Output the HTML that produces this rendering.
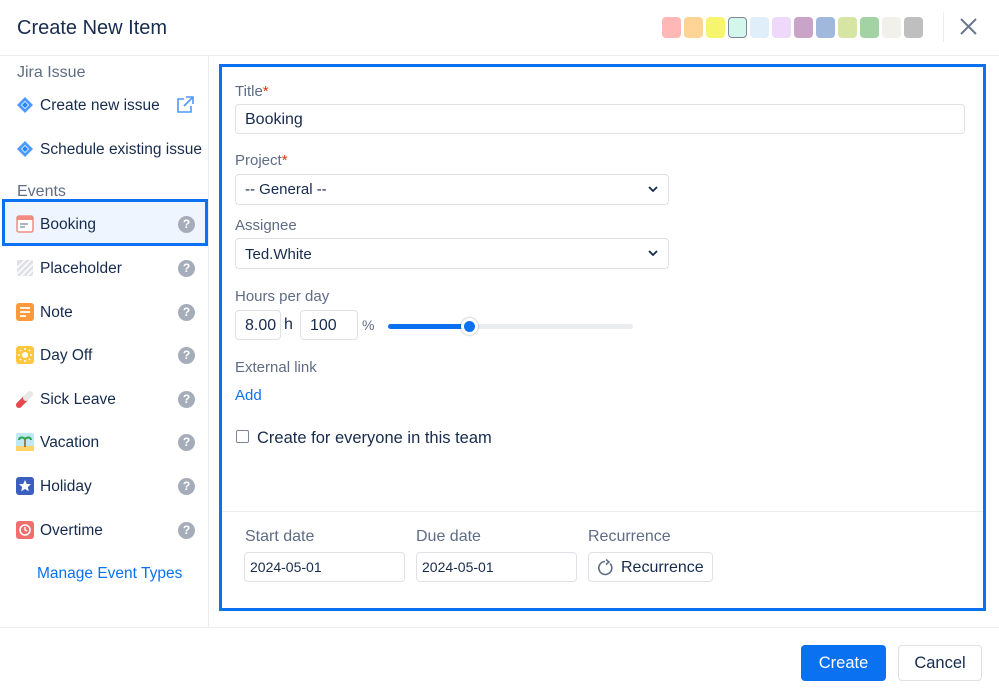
<!DOCTYPE html>
<html><head><meta charset="utf-8">
<style>
*{box-sizing:border-box;margin:0;padding:0}
body{width:999px;height:698px;background:#fff;font-family:"Liberation Sans",sans-serif;color:#172b4d;position:relative;overflow:hidden}
.a{position:absolute}
.lbl{color:#5e6c84;font-size:15px}
.inp{position:absolute;border:1px solid #dfe1e6;border-radius:4px;background:#fff;font-size:16px;padding-left:9px;display:flex;align-items:center;color:#172b4d}
.side{font-size:15.5px;color:#172b4d}
.q{position:absolute;left:178px;width:17px;height:17px;border-radius:50%;background:#a5adba;color:#fff;font-size:12px;font-weight:bold;text-align:center;line-height:17px}
.sw{position:absolute;top:17px;width:19px;height:21px;border-radius:4px}
.chev{position:absolute;right:10px;top:50%;margin-top:-4px}
</style></head><body>
<div class="a" style="left:17px;top:17px;font-size:20px;color:#172b4d">Create New Item</div>
<div class="sw" style="left:662px;background:#ffb8b5"></div>
<div class="sw" style="left:684px;background:#ffd494"></div>
<div class="sw" style="left:706px;background:#f7f56e"></div>
<div class="sw" style="left:728px;background:#d3f7ea;border:1px solid #7a869a"></div>
<div class="sw" style="left:750px;background:#e0eefa"></div>
<div class="sw" style="left:772px;background:#efd9fb"></div>
<div class="sw" style="left:794px;background:#c9a3c8"></div>
<div class="sw" style="left:816px;background:#a1b8dd"></div>
<div class="sw" style="left:838px;background:#d6e4a4"></div>
<div class="sw" style="left:860px;background:#a3d3a4"></div>
<div class="sw" style="left:882px;background:#f1f0ea"></div>
<div class="sw" style="left:904px;background:#bfbfbf"></div>
<div class="a" style="left:943px;top:12px;width:1px;height:30px;background:#ebecf0"></div>
<svg class="a" style="left:959px;top:17px" width="19" height="19" viewBox="0 0 19 19"><path d="M2 2L17 17M17 2L2 17" stroke="#6b778c" stroke-width="2"/></svg>
<div class="a" style="left:0;top:55px;width:999px;height:1px;background:#ebecf0"></div>
<div class="a" style="left:208px;top:56px;width:1px;height:571px;background:#ebecf0"></div>

<div class="a lbl" style="left:17px;top:64px;font-size:16px">Jira Issue</div>
<svg class="a" style="left:17px;top:97px" width="16" height="16" viewBox="0 0 16 16"><path d="M8 0L16 8L8 16L0 8Z" fill="#4c9aff"/><path d="M8 4L12 8L8 12L4 8Z" fill="#fff"/><path d="M8 5L11 8L8 11L5 8Z" fill="#2684ff"/></svg>
<div class="a side" style="left:40px;top:97px">Create new issue</div>
<svg class="a" style="left:176px;top:96px" width="18" height="18" viewBox="0 0 18 18" fill="none" stroke="#4c9aff" stroke-width="1.6"><path d="M8 3H2V16H15V10"/><path d="M10 1H17V8M17 1L8 10"/></svg>
<svg class="a" style="left:17px;top:141px" width="16" height="16" viewBox="0 0 16 16"><path d="M8 0L16 8L8 16L0 8Z" fill="#4c9aff"/><path d="M8 4L12 8L8 12L4 8Z" fill="#fff"/><path d="M8 5L11 8L8 11L5 8Z" fill="#2684ff"/></svg>
<div class="a side" style="left:40px;top:141px">Schedule existing issue</div>
<div class="a lbl" style="left:17px;top:183px;font-size:16px">Events</div>

<div class="a" style="left:2px;top:199px;width:206px;height:47px;border:3px solid #0a72f0;background:#eef5fe"></div>
<svg class="a" style="left:16px;top:215px" width="18" height="18" viewBox="0 0 18 18"><rect x="1" y="1" width="16" height="16" rx="2" fill="#fff" stroke="#f28b82" stroke-width="1.5"/><rect x="1" y="1" width="16" height="4" fill="#f28b82"/><path d="M4 9H12M4 12H9" stroke="#7a869a" stroke-width="1.3"/></svg>
<div class="a side" style="left:40px;top:216px">Booking</div><div class="q" style="top:216px">?</div>

<svg class="a" style="left:16px;top:259px" width="18" height="18" viewBox="0 0 18 18"><rect x="1" y="1" width="16" height="16" rx="2" fill="#dfe1e6"/><path d="M1 9L9 1M1 15L15 1M5 17L17 5M11 17L17 11" stroke="#fff" stroke-width="1.5"/></svg>
<div class="a side" style="left:40px;top:260px">Placeholder</div><div class="q" style="top:260px">?</div>
<svg class="a" style="left:16px;top:303px" width="18" height="18" viewBox="0 0 18 18"><rect x="0" y="0" width="18" height="18" rx="3" fill="#ff9a3c"/><path d="M4 5H14M4 9H14M4 13H10" stroke="#fff" stroke-width="1.8"/></svg>
<div class="a side" style="left:40px;top:304px">Note</div><div class="q" style="top:304px">?</div>
<svg class="a" style="left:16px;top:346px" width="18" height="18" viewBox="0 0 18 18"><rect width="18" height="18" rx="3" fill="#ffc740"/><circle cx="9" cy="9" r="3" fill="#fff"/><g stroke="#fff" stroke-width="1.5"><path d="M9 2V4M9 14V16M2 9H4M14 9H16M4 4L5 5M13 13L14 14M14 4L13 5M4 14L5 13"/></g></svg>
<div class="a side" style="left:40px;top:347px">Day Off</div><div class="q" style="top:347px">?</div>
<svg class="a" style="left:16px;top:390px" width="18" height="18" viewBox="0 0 18 18"><path d="M3 15L10 8" stroke="#e5484d" stroke-width="6" stroke-linecap="round"/><path d="M10 8L14 4" stroke="#e8e8e8" stroke-width="6" stroke-linecap="round"/></svg>
<div class="a side" style="left:40px;top:391px">Sick Leave</div><div class="q" style="top:391px">?</div>
<svg class="a" style="left:16px;top:433px" width="18" height="18" viewBox="0 0 18 18"><rect width="18" height="18" rx="2" fill="#bfe8f5"/><rect y="13" width="18" height="5" fill="#ffd36b"/><path d="M9 14V6" stroke="#8b5a2b" stroke-width="1.5"/><path d="M9 6C6 3 3 5 3 7M9 6C12 3 15 5 15 7" stroke="#2da44e" stroke-width="2" fill="none"/></svg>
<div class="a side" style="left:40px;top:434px">Vacation</div><div class="q" style="top:434px">?</div>
<svg class="a" style="left:16px;top:477px" width="18" height="18" viewBox="0 0 18 18"><rect width="18" height="18" rx="3" fill="#3b5fc0"/><path d="M9 3L10.8 7L15 7.3L11.8 10L12.8 14.3L9 12L5.2 14.3L6.2 10L3 7.3L7.2 7Z" fill="#fff"/></svg>
<div class="a side" style="left:40px;top:478px">Holiday</div><div class="q" style="top:478px">?</div>
<svg class="a" style="left:16px;top:521px" width="18" height="18" viewBox="0 0 18 18"><rect width="18" height="18" rx="3" fill="#f26d6d"/><circle cx="9" cy="9" r="5" fill="none" stroke="#fff" stroke-width="1.6"/><path d="M9 6V9L11 10" stroke="#fff" stroke-width="1.4" fill="none"/></svg>
<div class="a side" style="left:40px;top:522px">Overtime</div><div class="q" style="top:522px">?</div>
<div class="a" style="left:37px;top:565px;font-size:15.5px;color:#0a72f0">Manage Event Types</div>

<div class="a" style="left:219px;top:64px;width:767px;height:547px;border:3px solid #0a72f0"></div>
<div class="a lbl" style="left:235px;top:83px">Title<span style="color:#de350b">*</span></div>
<div class="inp" style="left:235px;top:104px;width:730px;height:30px;padding-top:2px">Booking</div>
<div class="a lbl" style="left:235px;top:152px">Project<span style="color:#de350b">*</span></div>
<div class="inp" style="left:235px;top:174px;width:434px;height:31px;font-size:15px">-- General --<svg class="chev" width="10" height="7" viewBox="0 0 10 7"><path d="M1 1L5 5L9 1" stroke="#172b4d" stroke-width="1.8" fill="none"/></svg></div>
<div class="a lbl" style="left:235px;top:217px">Assignee</div>
<div class="inp" style="left:235px;top:238px;width:434px;height:31px;font-size:15px;padding-top:2px">Ted.White<svg class="chev" width="10" height="7" viewBox="0 0 10 7"><path d="M1 1L5 5L9 1" stroke="#172b4d" stroke-width="1.8" fill="none"/></svg></div>
<div class="a lbl" style="left:235px;top:288px">Hours per day</div>
<div class="inp" style="left:235px;top:310px;width:46px;height:30px;padding-top:1px">8.00</div>
<div class="a" style="left:284px;top:316px;font-size:16px">h</div>
<div class="inp" style="left:300px;top:310px;width:58px;height:30px;padding-top:1px">100</div>
<div class="a lbl" style="left:362px;top:317px;font-size:14px">%</div>
<div class="a" style="left:388px;top:324px;width:245px;height:5px;border-radius:3px;background:#ebecf0"></div>
<div class="a" style="left:388px;top:324px;width:82px;height:5px;border-radius:3px;background:#0a72f0"></div>
<div class="a" style="left:461px;top:318px;width:17px;height:17px;border-radius:50%;background:#0a72f0;border:3px solid #fff;box-shadow:0 0 2px rgba(0,0,0,.4)"></div>
<div class="a lbl" style="left:235px;top:359px">External link</div>
<div class="a" style="left:235px;top:387px;font-size:15px;color:#0a72f0">Add</div>
<div class="a" style="left:236px;top:430px;width:13px;height:13px;border:1px solid #7a869a;border-radius:2px"></div>
<div class="a" style="left:257px;top:429px;font-size:16.5px;color:#172b4d">Create for everyone in this team</div>
<div class="a" style="left:222px;top:511px;width:761px;height:1px;background:#ebecf0"></div>
<div class="a lbl" style="left:245px;top:528px;font-size:16px">Start date</div>
<div class="a lbl" style="left:416px;top:528px;font-size:16px">Due date</div>
<div class="a lbl" style="left:588px;top:528px;font-size:16px">Recurrence</div>
<div class="inp" style="left:244px;top:552px;width:161px;height:30px;font-size:14px;padding-left:5px">2024-05-01</div>
<div class="inp" style="left:416px;top:552px;width:161px;height:30px;font-size:14px;padding-left:5px">2024-05-01</div>
<div class="inp" style="left:588px;top:552px;width:125px;height:30px;padding-left:8px;font-size:16px;padding-top:2px"><svg width="18" height="18" viewBox="0 0 18 18" style="margin-right:6px" fill="none" stroke="#5e6c84" stroke-width="1.6"><path d="M13 4.5A6.5 6.5 0 1 1 8 2.5"/><path d="M9 0.5L12 3L9 5.5" stroke-linejoin="round"/></svg>Recurrence</div>

<div class="a" style="left:0;top:627px;width:999px;height:1px;background:#ebecf0"></div>
<div class="a" style="left:801px;top:645px;width:85px;height:36px;border-radius:4px;background:#0a72f0;color:#fff;font-size:16.5px;text-align:center;line-height:37px">Create</div>
<div class="a" style="left:898px;top:645px;width:84px;height:36px;border-radius:4px;border:1px solid #dfe1e6;color:#172b4d;font-size:16.5px;text-align:center;line-height:35px">Cancel</div>
</body></html>
